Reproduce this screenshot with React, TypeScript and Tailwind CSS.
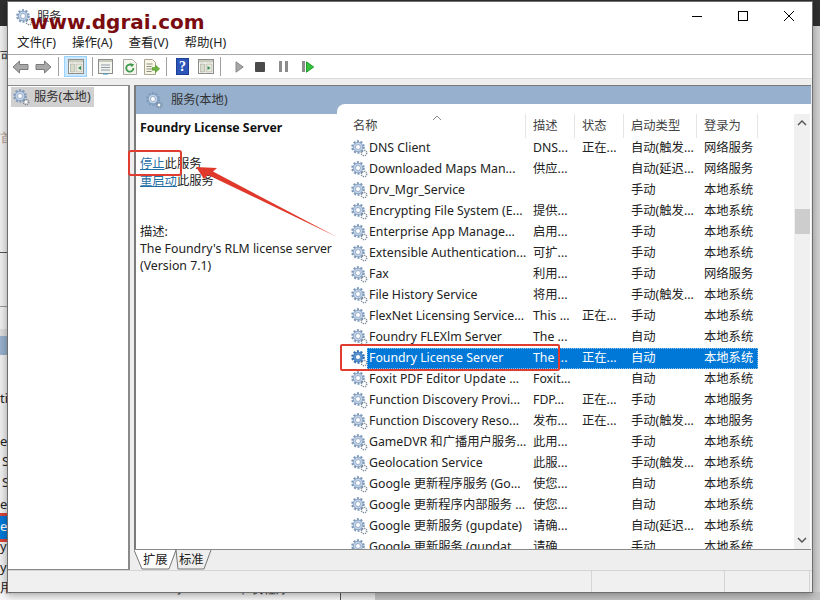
const uiFont = 'font-["Noto_Sans","Noto_Sans_CJK_SC",sans-serif]';

type Service = {
  name: string;
  desc: string;
  status: string;
  start: string;
  login: string;
  selected?: boolean;
};

const services: Service[] = [
  { name: 'DNS Client', desc: 'DNS...', status: '正在...', start: '自动(触发...', login: '网络服务' },
  { name: 'Downloaded Maps Man...', desc: '供应...', status: '', start: '自动(延迟...', login: '网络服务' },
  { name: 'Drv_Mgr_Service', desc: '', status: '', start: '手动', login: '本地系统' },
  { name: 'Encrypting File System (E...', desc: '提供...', status: '', start: '手动(触发...', login: '本地系统' },
  { name: 'Enterprise App Manage...', desc: '启用...', status: '', start: '手动', login: '本地系统' },
  { name: 'Extensible Authentication...', desc: '可扩...', status: '', start: '手动', login: '本地系统' },
  { name: 'Fax', desc: '利用...', status: '', start: '手动', login: '网络服务' },
  { name: 'File History Service', desc: '将用...', status: '', start: '手动(触发...', login: '本地系统' },
  { name: 'FlexNet Licensing Service...', desc: 'This ...', status: '正在...', start: '手动', login: '本地系统' },
  { name: 'Foundry FLEXlm Server', desc: 'The ...', status: '', start: '自动', login: '本地系统' },
  { name: 'Foundry License Server', desc: 'The ...', status: '正在...', start: '自动', login: '本地系统', selected: true },
  { name: 'Foxit PDF Editor Update ...', desc: 'Foxit...', status: '', start: '自动', login: '本地系统' },
  { name: 'Function Discovery Provi...', desc: 'FDP...', status: '正在...', start: '手动', login: '本地服务' },
  { name: 'Function Discovery Reso...', desc: '发布...', status: '正在...', start: '手动(触发...', login: '本地服务' },
  { name: 'GameDVR 和广播用户服务...', desc: '此用...', status: '', start: '手动', login: '本地系统' },
  { name: 'Geolocation Service', desc: '此服...', status: '', start: '手动(触发...', login: '本地系统' },
  { name: 'Google 更新程序服务 (Go...', desc: '使您...', status: '', start: '自动', login: '本地系统' },
  { name: 'Google 更新程序内部服务 ...', desc: '使您...', status: '', start: '自动', login: '本地系统' },
  { name: 'Google 更新服务 (gupdate)', desc: '请确...', status: '', start: '自动(延迟...', login: '本地系统' },
  { name: 'Google 更新服务 (gupdat...', desc: '请确...', status: '', start: '手动', login: '本地系统' },
];

function Gear({ selected }: { selected?: boolean }) {
  const edge = selected ? '#2f6fb5' : '#7b98bb';
  const body = selected ? '#5d93cf' : '#c3d3e5';
  return (
    <svg width="17" height="17" viewBox="0 0 17 17" className="shrink-0">
      <circle cx="7" cy="7" r="5.6" fill="none" stroke={edge} strokeWidth="2.4" strokeDasharray="2 1.52" />
      <circle cx="7" cy="7" r="4.8" fill={body} stroke={edge} strokeWidth="0.8" />
      <circle cx="7" cy="7" r="2.5" fill="#ffffff" stroke={edge} strokeWidth="0.7" />
      <circle cx="13" cy="13" r="2.7" fill="none" stroke="#7d8a99" strokeWidth="1.5" strokeDasharray="1.2 0.9" />
      <circle cx="13" cy="13" r="1.2" fill="#ffffff" />
    </svg>
  );
}

function ToolSep({ className }: { className: string }) {
  return <span className={`mr-[5px] h-[19px] w-px shrink-0 bg-[#a0a0a0] ${className}`} />;
}

function ArrowIcon({ flip }: { flip?: boolean }) {
  return (
    <svg width="17" height="14" viewBox="0 0 17 14" className={flip ? 'scale-x-[-1]' : ''}>
      <path d="M1 7 7.5 1v3.5H16v5H7.5V13z" fill="#a9a9a9" stroke="#7b7b7b" />
    </svg>
  );
}

function PaneIcon({ right }: { right?: boolean }) {
  return (
    <svg width="16" height="15" viewBox="0 0 16 15" className="shrink-0">
      <rect x="0.5" y="0.5" width="15" height="14" fill="#fbfbf6" stroke="#8c8c8c" />
      <rect x="1" y="1" width="14" height="2.5" fill="#c9cbbd" />
      <rect x="2.5" y="5" width="4" height="8" fill="#d8dccd" stroke="#9a9a8a" strokeWidth="0.5" />
      <rect x="8" y="5" width="6" height="8" fill="#e8e8dc" stroke="#9a9a8a" strokeWidth="0.5" />
      <path d={right ? 'M9.5 7v4l3-2z' : 'M13 7v4l-3-2z'} fill="#2e8b57" />
    </svg>
  );
}

function Toolbar() {
  return (
    <div className="flex h-[23px] items-center bg-white pl-px">
      <span className="flex w-[23px] justify-center"><ArrowIcon /></span>
      <span className="flex w-[23px] justify-center"><ArrowIcon flip /></span>
      <ToolSep className="ml-[3px]" />
      <span className="flex h-[21px] w-[23px] items-center justify-center border border-[#99d1ff] bg-[#cce8ff]">
        <PaneIcon />
      </span>
      <ToolSep className="ml-[5px]" />
      <svg width="15" height="16" viewBox="0 0 15 16" className="shrink-0">
        <rect x="0.5" y="0.5" width="14" height="14" fill="#f4f4ee" stroke="#8c8c8c" />
        <rect x="1" y="1" width="13" height="2" fill="#c8c8bc" />
        <path d="M3 6h9M3 8.5h9M3 11h9" stroke="#8f9aa8" />
        <path d="M5 15h5" stroke="#4f9bc8" strokeWidth="1.2" />
      </svg>
      <svg width="14" height="16" viewBox="0 0 14 16" className="ml-[10px] shrink-0">
        <path d="M.5.5h9l4 4v11H.5z" fill="#f6f6ee" stroke="#a8a8a0" />
        <path d="M10.4 9a3.6 3.6 0 1 1-1.2-2.6" fill="none" stroke="#3b9b4b" strokeWidth="1.8" />
        <path d="M7.5 4.2 11.2 5.4 8.7 8.3z" fill="#3b9b4b" />
      </svg>
      <svg width="16" height="16" viewBox="0 0 16 16" className="ml-[7px] shrink-0">
        <path d="M.5.5h8l3 3v12H.5z" fill="#f8f6e6" stroke="#a8a490" />
        <path d="M2.5 5h6M2.5 7.5h5M2.5 10h5M2.5 12.5h5" stroke="#8f8f80" />
        <path d="M8 8.5h3.5V6l4.2 3.8-4.2 3.8v-2.4H8z" fill="#6cb33f" stroke="#4f8f2c" strokeWidth="0.5" />
      </svg>
      <ToolSep className="ml-[6px]" />
      <span className="ml-[4px] flex h-[17px] w-[13px] items-center justify-center border border-[#1c3f94] bg-[#2c55b8] font-['Liberation_Serif',serif] text-[14px] leading-none font-bold text-white">
        ?
      </span>
      <span className="ml-[9px] flex"><PaneIcon right /></span>
      <ToolSep className="ml-[6px]" />
      <svg width="9" height="12" viewBox="0 0 9 12" className="ml-[9px] shrink-0">
        <path d="M1 .8v10.4L8.2 6z" fill="#a6a6a6" stroke="#8a8a8a" />
      </svg>
      <span className="ml-[11px] h-[10px] w-[10px] rounded-[1px] bg-[#4a4a4a]" />
      <span className="ml-[14px] flex gap-[3px]">
        <span className="h-[11px] w-[3px] bg-[#8c8c8c]" />
        <span className="h-[11px] w-[3px] bg-[#8c8c8c]" />
      </span>
      <span className="ml-[14px] flex items-center gap-[1px]">
        <span className="h-[11px] w-[3px] bg-[#8c8c8c]" />
        <svg width="8" height="12" viewBox="0 0 8 12"><path d="M.5.8v10.4L7.7 6z" fill="#35c23f" stroke="#239a2d" /></svg>
      </span>
    </div>
  );
}

function ServiceRow({ s }: { s: Service }) {
  return (
    <div className="flex h-[21px] shrink-0 items-center pl-[14px] text-[12.3px] text-[#222]">
      <Gear selected={s.selected} />
      <div
        className={`-ml-px flex h-[21px] items-center whitespace-nowrap ${
          s.selected ? 'outline outline-1 -outline-offset-1 outline-dotted outline-[#8fc1ea] bg-[#0078d7] text-white' : ''
        }`}
      >
        <span className="w-[159px] overflow-hidden pl-[2px]">{s.name}</span>
        <span className="w-[49px] overflow-hidden pl-[7px]">{s.desc}</span>
        <span className="w-[49px] overflow-hidden pl-[7px]">{s.status}</span>
        <span className="w-[73px] overflow-hidden pl-[7px]">{s.start}</span>
        <span className="w-[61px] overflow-hidden pl-[7px]">{s.login}</span>
      </div>
    </div>
  );
}

function ServiceList() {
  return (
    <div className="relative -mt-[10px] flex h-[445px] min-w-0 flex-1 overflow-hidden rounded-tl-[8px] bg-white">
      <div className="min-w-0 flex-1 overflow-hidden pt-[10px]">
        <div className="relative flex h-[24px] text-[12.3px] text-[#444]">
          <span className="flex w-[189px] items-center border-r border-[#e5e5e5] pl-[16px]">名称</span>
          <svg width="10" height="6" viewBox="0 0 10 6" className="absolute top-[1px] left-[95px]">
            <path d="M1 5 5 1l4 4" fill="none" stroke="#8a8a8a" />
          </svg>
          <span className="flex w-[49px] items-center border-r border-[#e5e5e5] pl-[7px]">描述</span>
          <span className="flex w-[49px] items-center border-r border-[#e5e5e5] pl-[7px]">状态</span>
          <span className="flex w-[73px] items-center border-r border-[#e5e5e5] pl-[7px]">启动类型</span>
          <span className="flex w-[61px] items-center border-r border-[#e5e5e5] pl-[7px]">登录为</span>
        </div>
        <div className="flex h-[411px] flex-col overflow-hidden">
          {services.map((s) => (
            <ServiceRow key={s.name} s={s} />
          ))}
        </div>
      </div>
      <div className="mt-[10px] mr-px flex w-[16px] shrink-0 flex-col items-center bg-[#f0f0f0]">
        <svg width="10" height="6" viewBox="0 0 10 6" className="mt-[6px]">
          <path d="M1 5 5 1l4 4" fill="none" stroke="#505050" strokeWidth="1.4" />
        </svg>
        <div className="mt-[83px] h-[25px] w-[15px] bg-[#cdcdcd]" />
        <svg width="10" height="6" viewBox="0 0 10 6" className="mt-auto mb-[6px]">
          <path d="M1 1l4 4 4-4" fill="none" stroke="#505050" strokeWidth="1.4" />
        </svg>
      </div>
    </div>
  );
}

function DetailPanel() {
  return (
    <div className="w-[201px] shrink-0 bg-white pt-[4px] pl-[4px] text-[12.3px] leading-[17px] text-[#222]">
      <p className="leading-[20px] font-bold text-[#111]">Foundry License Server</p>
      <p className="mt-[17px]">
        <span className="text-[#1f6fa5] underline">停止</span>此服务
      </p>
      <p>
        <span className="text-[#1f6fa5] underline">重启动</span>此服务
      </p>
      <p className="mt-[34px]">描述:</p>
      <p className="whitespace-nowrap">The Foundry's RLM license server</p>
      <p>(Version 7.1)</p>
    </div>
  );
}

function Tabs() {
  return (
    <div className="relative flex h-[21px] shrink-0 border-t border-[#8a8a8a] bg-[#eeeeee] pt-[1px] text-[12.3px] text-[#222]">
      <svg width="80" height="21" viewBox="0 0 80 21" className="absolute -top-px left-0">
        <path d="M0 1 8 20H35L42 1z" fill="#ffffff" />
        <path d="M0 1 8 20H35L42 1" fill="none" stroke="#777" />
        <path d="M42 1 44 20H70L77 1" fill="none" stroke="#777" />
      </svg>
      <span className="relative ml-[9px] w-[36px]">扩展</span>
      <span className="relative w-[36px]">标准</span>
    </div>
  );
}

function ServicesWindow() {
  return (
    <div className={`absolute top-px left-[7px] flex h-[592px] w-[806px] flex-col border border-[#6e6e6e] bg-[#eeeeee] shadow-[0_2px_8px_rgba(0,0,0,0.35)] ${uiFont}`}>
      <div className="flex h-[31px] shrink-0 items-center bg-white pl-[8px]">
        <Gear />
        <span className="ml-[4px] text-[12.3px] text-[#333]">服务</span>
        <div className="ml-auto -mt-[4px] flex items-center text-black">
          <svg width="46" height="30" viewBox="0 0 46 30"><path d="M18 15.5h10" stroke="#000" /></svg>
          <svg width="46" height="30" viewBox="0 0 46 30"><rect x="18.5" y="10.5" width="9" height="9" fill="none" stroke="#000" /></svg>
          <svg width="46" height="30" viewBox="0 0 46 30"><path d="M18 10l10 10M28 10 18 20" fill="none" stroke="#000" /></svg>
        </div>
      </div>
      <div className="flex h-[22px] shrink-0 items-start gap-[16px] border-b border-[#aaaaaa] bg-white pt-px pl-[9px] text-[12.5px] leading-[18px] text-[#222]">
        <span>文件(F)</span>
        <span>操作(A)</span>
        <span>查看(V)</span>
        <span>帮助(H)</span>
      </div>
      <Toolbar />
      <div className="flex min-h-0 flex-1 gap-[4px] border-t border-[#dcdcdc] pt-[6px] pr-px">
        <div className="w-[122px] shrink-0 border-t border-r-2 border-b border-[#8a8a8a] bg-white pt-[1px] pl-[3px]">
          <div className="flex h-[20px] w-[83px] items-center gap-[4px] bg-[#d0d0d0] pl-[2px] text-[12.3px] text-[#333]">
            <Gear />
            服务(本地)
          </div>
        </div>
        <div className="flex min-w-0 flex-1 flex-col">
          <div className="flex min-h-0 flex-1 flex-col border-t border-l-2 border-[#7a7a7a] bg-white">
            <div className="flex h-[28px] shrink-0 items-center gap-[8px] bg-[#96b0cd] pt-px pl-[10px] text-[12.3px] text-[#333]">
              <Gear />
              服务(本地)
            </div>
            <div className="flex min-h-0 flex-1 items-start">
              <DetailPanel />
              <ServiceList />
            </div>
          </div>
          <Tabs />
        </div>
      </div>
      <div className="flex h-[22px] shrink-0 border-t border-[#d5d5d5] bg-[#f0f0f0]">
        <span className="w-[584px] border-r border-[#d5d5d5]" />
        <span className="w-[133px] border-r border-[#d5d5d5]" />
        <span className="w-[85px] border-r border-[#d5d5d5]" />
      </div>
    </div>
  );
}

function Desktop() {
  return (
    <div className="absolute inset-0 overflow-hidden bg-[#eeeeee] text-[13px] text-[#222]">
      <div className="absolute top-0 left-0 h-[26px] w-full bg-[#2f2f2f]" />
      <div className="absolute top-[26px] right-0 bottom-0 w-[8px] bg-[#d2d2d2]" />
      <div className="absolute right-0 bottom-0 left-[375px] h-[8px] bg-[#c4c4c4]" />
      <div className="absolute bottom-0 left-[340px] h-[8px] w-px bg-[#555]" />
      <div className="absolute bottom-0 left-0 h-[8px] w-[340px] bg-[#f7f7f7]" />
      <span className="absolute top-[47px] left-0">可</span>
      <span className="absolute top-[128px] left-0 text-[#b59a90]">首</span>
      <div className="absolute top-[252px] left-0 h-px w-[8px] bg-[#555]" />
      <div className="absolute top-[306px] left-0 h-px w-[8px] bg-[#999]" />
      <div className="absolute top-[329px] left-0 h-[7px] w-[8px] bg-[#dcdcdc]" />
      <div className="absolute top-[336px] left-0 h-[19px] w-[8px] bg-[#96b0cd]" />
      <span className="absolute top-[389px] left-0">ti</span>
      <span className="absolute top-[432px] left-0">e</span>
      <span className="absolute top-[452px] left-[2px]">S</span>
      <span className="absolute top-[473px] left-[2px]">S</span>
      <span className="absolute top-[495px] left-0">e</span>
      <div className="absolute top-[513px] left-0 h-[29px] w-[8px] border-y-[3px] border-[#d8443a] bg-[#0078d7] text-white">
        <span className="block leading-[20px]">e</span>
      </div>
      <span className="absolute top-[537px] left-0">y</span>
      <span className="absolute top-[558px] left-0">y</span>
      <span className="absolute top-[578px] left-0">用</span>
      <span className="absolute top-[579px] left-[20px] text-[#333]">Mozilla Firefox</span>
      <span className="absolute top-[579px] left-[162px] text-[#333]">5 小</span>
      <span className="absolute top-[579px] left-[237px] text-[#333]">下载程序</span>
    </div>
  );
}

function Annotations() {
  return (
    <>
      <div className="absolute top-[150px] left-[128px] h-[26px] w-[54px] rounded-[3px] border-2 border-[#e13c30]" />
      <div className="absolute top-[344px] left-[340px] h-[27px] w-[220px] rounded-[2px] border-2 border-[#e13c30]" />
      <svg width="160" height="90" viewBox="0 0 160 90" className="absolute top-[160px] left-[190px]">
        <path d="M6 7 27 8 23 11.5 147 77 18 15 14 19z" fill="#e0392b" />
      </svg>
      <span className="absolute top-[8px] left-[30px] font-['DejaVu_Sans',sans-serif] text-[20px] leading-[28px] font-bold whitespace-nowrap text-[#7a0c10]">
        www.dgrai.com
      </span>
    </>
  );
}

export default function App() {
  return (
    <div className="relative h-[600px] w-[820px] overflow-hidden">
      <Desktop />
      <ServicesWindow />
      <Annotations />
    </div>
  );
}
